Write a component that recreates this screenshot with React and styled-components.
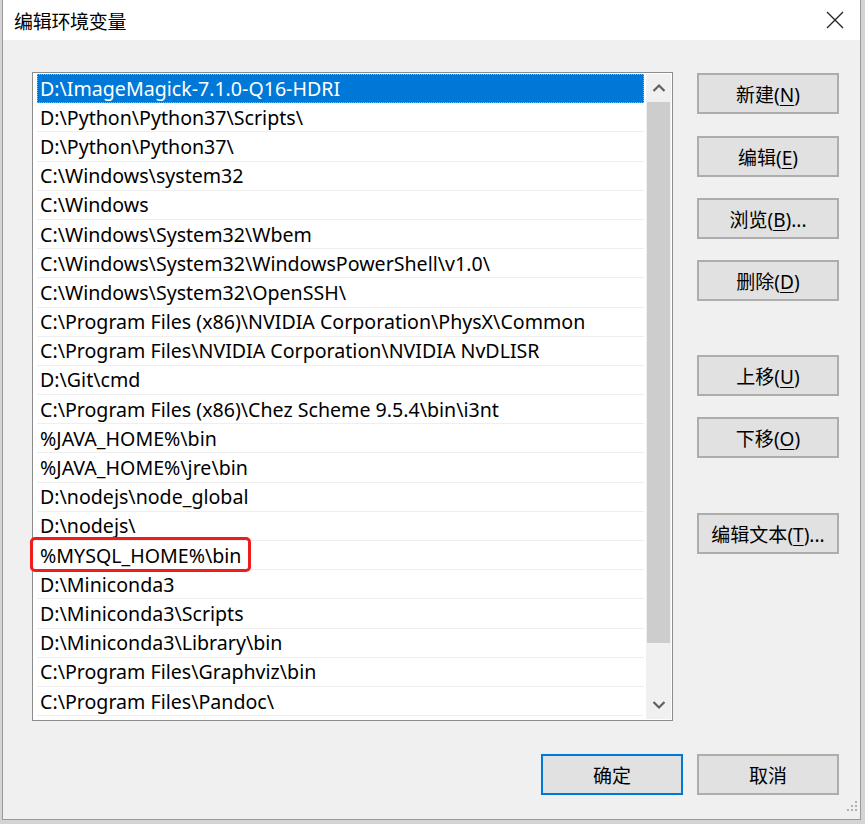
import React from "react";
import styled, { createGlobalStyle } from "styled-components";

const Global = createGlobalStyle`
  html, body { margin: 0; padding: 0; background: #d4d4d4; }
  body { font-family: "Noto Sans", "Noto Sans CJK SC", sans-serif; }
`;

const Window = styled.div`
  margin-left: 2px;
  width: 859px;
  height: 820px;
  border: 1px solid #9a9a9a;
  border-top: none;
  background: #f0f0f0;
  display: flex;
  flex-direction: column;
  position: relative;
  box-sizing: border-box;
`;

const TitleBar = styled.div`
  height: 40px;
  background: #ffffff;
  display: flex;
  align-items: center;
  justify-content: space-between;
  padding-left: 11px;
  padding-right: 14px;
  flex-shrink: 0;
`;

const Title = styled.div`
  font-family: "Noto Sans CJK SC", sans-serif;
  font-size: 19px;
  color: #000;
  letter-spacing: -0.3px;
`;

const CloseBtn = styled.div`
  width: 22px;
  height: 22px;
  display: flex;
  align-items: center;
  justify-content: center;
`;

const Body = styled.div`
  flex: 1;
  display: flex;
  flex-direction: column;
  padding: 32px 21px 0 29px;
`;

const Main = styled.div`
  display: flex;
  gap: 24px;
`;

const ListBox = styled.div`
  width: 641px;
  height: 649px;
  box-sizing: border-box;
  border: 1px solid #8c8c8c;
  background: #fff;
  display: flex;
  padding: 1px 1px 1px 4px;
`;

const Rows = styled.div`
  flex: 1;
  display: flex;
  flex-direction: column;
`;

const Row = styled.div`
  position: relative;
  height: 29.2px;
  flex-shrink: 0;
  box-sizing: border-box;
  display: flex;
  align-items: center;
  padding-left: 3px;
  font-size: 19.6px;
  color: ${(p) => (p.$selected ? "#fff" : "#000")};
  background: ${(p) => (p.$selected ? "#0078d7" : "#fff")};
  border-bottom: 1px solid ${(p) => (p.$selected ? "#0078d7" : "#efefef")};
  outline: ${(p) => (p.$selected ? "1px dotted #e8a050" : "none")};
  outline-offset: -1px;
  white-space: nowrap;
`;

const Highlight = styled.div`
  position: absolute;
  z-index: 2;
  left: -7px;
  top: -4px;
  width: 221px;
  height: 35px;
  box-sizing: border-box;
  border: 3px solid #ef1c1c;
  border-radius: 5px;
  pointer-events: none;
`;

const ScrollBar = styled.div`
  width: 25px;
  margin-left: 2px;
  background: #f0f0f0;
  display: flex;
  flex-direction: column;
`;

const Arrow = styled.div`
  height: 28px;
  display: flex;
  align-items: center;
  justify-content: center;
  flex-shrink: 0;
`;

const Track = styled.div`
  flex: 1;
  display: flex;
  flex-direction: column;
`;

const Thumb = styled.div`
  height: 541px;
  margin: 0 1px;
  background: #cdcdcd;
`;

const ButtonCol = styled.div`
  display: flex;
  flex-direction: column;
  padding-top: 1px;
`;

const Button = styled.div`
  width: 142px;
  height: 41px;
  box-sizing: border-box;
  margin-top: ${(p) => p.$mt || 0}px;
  border: ${(p) => (p.$default ? "2px solid #0078d7" : "2px solid #adadad")};
  background: #e1e1e1;
  display: flex;
  align-items: center;
  justify-content: center;
  font-size: 19px;
  color: #000;
  font-family: "Noto Sans", "Noto Sans CJK SC", sans-serif;
`;

const U = styled.span`
  text-decoration: underline;
  text-underline-offset: 3px;
  text-decoration-thickness: 1px;
`;

const Footer = styled.div`
  display: flex;
  justify-content: flex-end;
  gap: 14px;
  margin-top: 33px;
`;

const Grip = styled.div`
  position: absolute;
  right: 2px;
  bottom: 2px;
`;

const items = [
  "D:\\ImageMagick-7.1.0-Q16-HDRI",
  "D:\\Python\\Python37\\Scripts\\",
  "D:\\Python\\Python37\\",
  "C:\\Windows\\system32",
  "C:\\Windows",
  "C:\\Windows\\System32\\Wbem",
  "C:\\Windows\\System32\\WindowsPowerShell\\v1.0\\",
  "C:\\Windows\\System32\\OpenSSH\\",
  "C:\\Program Files (x86)\\NVIDIA Corporation\\PhysX\\Common",
  "C:\\Program Files\\NVIDIA Corporation\\NVIDIA NvDLISR",
  "D:\\Git\\cmd",
  "C:\\Program Files (x86)\\Chez Scheme 9.5.4\\bin\\i3nt",
  "%JAVA_HOME%\\bin",
  "%JAVA_HOME%\\jre\\bin",
  "D:\\nodejs\\node_global",
  "D:\\nodejs\\",
  "%MYSQL_HOME%\\bin",
  "D:\\Miniconda3",
  "D:\\Miniconda3\\Scripts",
  "D:\\Miniconda3\\Library\\bin",
  "C:\\Program Files\\Graphviz\\bin",
  "C:\\Program Files\\Pandoc\\",
];

const Label = ({ text, k, suffix = "" }) => (
  <span>
    {text}(<U>{k}</U>){suffix}
  </span>
);

export default function App() {
  return (
    <>
      <Global />
      <Window>
        <TitleBar>
          <Title>编辑环境变量</Title>
          <CloseBtn>
            <svg width="18" height="18" viewBox="0 0 18 18">
              <path d="M1 1 L17 17 M17 1 L1 17" stroke="#222" strokeWidth="1.3" />
            </svg>
          </CloseBtn>
        </TitleBar>
        <Body>
          <Main>
            <ListBox>
              <Rows>
                {items.map((t, i) => (
                  <Row key={i} $selected={i === 0}>
                    {t}
                    {i === 16 && <Highlight />}
                  </Row>
                ))}
              </Rows>
              <ScrollBar>
                <Arrow>
                  <svg width="14" height="10" viewBox="0 0 14 10">
                    <path d="M1.5 8 L7 2.5 L12.5 8" fill="none" stroke="#606060" strokeWidth="2.2" />
                  </svg>
                </Arrow>
                <Track>
                  <Thumb />
                </Track>
                <Arrow>
                  <svg width="14" height="10" viewBox="0 0 14 10">
                    <path d="M1.5 2 L7 7.5 L12.5 2" fill="none" stroke="#606060" strokeWidth="2.2" />
                  </svg>
                </Arrow>
              </ScrollBar>
            </ListBox>
            <ButtonCol>
              <Button><Label text="新建" k="N" /></Button>
              <Button $mt={22}><Label text="编辑" k="E" /></Button>
              <Button $mt={21}><Label text="浏览" k="B" suffix="..." /></Button>
              <Button $mt={21}><Label text="删除" k="D" /></Button>
              <Button $mt={54}><Label text="上移" k="U" /></Button>
              <Button $mt={21}><Label text="下移" k="O" /></Button>
              <Button $mt={55}><Label text="编辑文本" k="T" suffix="..." /></Button>
            </ButtonCol>
          </Main>
          <Footer>
            <Button $default>确定</Button>
            <Button>取消</Button>
          </Footer>
        </Body>
        <Grip>
          <svg width="12" height="12" viewBox="0 0 12 12">
            {[[9, 1], [9, 5], [5, 5], [9, 9], [5, 9], [1, 9]].map(([x, y], i) => (
              <rect key={i} x={x} y={y} width="2" height="2" fill="#b0b0b0" />
            ))}
          </svg>
        </Grip>
      </Window>
    </>
  );
}
